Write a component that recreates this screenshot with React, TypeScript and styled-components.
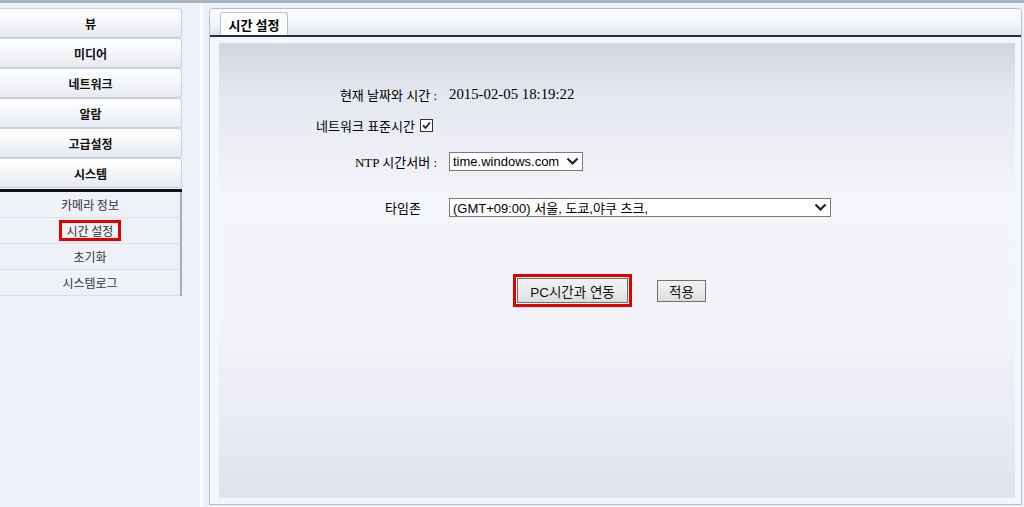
import styled, { createGlobalStyle } from 'styled-components';

const GlobalStyle = createGlobalStyle`
  html, body {
    margin: 0;
    padding: 0;
    background: #EDF1F9;
  }
  body {
    font-family: "Liberation Sans", "Noto Sans CJK KR", sans-serif;
    color: #000;
  }
`

const Page = styled.div`
  display: flex;
  height: 507px;
  box-sizing: border-box;
  border-top: 3px solid #A9B4C1;
  overflow: hidden;
`

const Sidebar = styled.nav`
  width: 182px;
  padding-top: 5px;
  flex-shrink: 0;
`

const MenuButton = styled.div`
  height: 30px;
  box-sizing: border-box;
  display: flex;
  align-items: center;
  justify-content: center;
  border: 1px solid #C9D1DC;
  border-left: none;
  border-radius: 0 3px 3px 0;
  background: linear-gradient(180deg, #FFFFFF 0%, #F7F8FA 40%, #E6E9EE 100%);
  font-family: "Noto Sans CJK KR", sans-serif;
  font-weight: bold;
  font-size: 12px;
  color: #111;
`

const ActiveBar = styled.div`
  height: 3px;
  margin: 1px 0 0;
  background: #111;
`

const SubMenu = styled.ul`
  list-style: none;
  margin: 0;
  padding: 0;
  width: 180px;
  background: #EEF1F6;
  border-right: 2px solid #A8B0BA;
`

const SubItem = styled.li`
  height: 26px;
  display: flex;
  align-items: center;
  justify-content: center;
  border-bottom: 1px solid #DCE1E8;
  font-family: "Noto Sans CJK KR", sans-serif;
  font-size: 12px;
  color: #333;
  box-sizing: border-box;
`

const Marked = styled.span`
  border: 3px solid #E50000;
  padding: 0 5px;
  line-height: 15px;
`

const Divider = styled.div`
  width: 3px;
  margin-left: 18px;
  margin-right: 6px;
  background: #FFFFFF;
`

const Panel = styled.section`
  width: 813px;
  margin-top: 5px;
  height: 497px;
  box-sizing: border-box;
  border: 1px solid #B3BECB;
  border-radius: 4px 4px 0 0;
  background: #F3F6FA;
  display: flex;
  flex-direction: column;
`

const TabBar = styled.div`
  height: 26px;
  padding-left: 10px;
  display: flex;
  align-items: flex-end;
  background: linear-gradient(180deg, #FBFCFD 0%, #F4F7FA 50%, #E1E7EE 100%);
  border-bottom: 2px solid #1D3145;
  border-radius: 4px 4px 0 0;
`

const Tab = styled.div`
  width: 68px;
  height: 23px;
  box-sizing: border-box;
  border: 1px solid #B8C2CE;
  border-bottom: none;
  border-radius: 3px 3px 0 0;
  background: #FFFFFF;
  display: flex;
  align-items: center;
  justify-content: center;
  font-family: "Noto Sans CJK KR", sans-serif;
  font-weight: bold;
  font-size: 13px;
`

const Body = styled.div`
  flex: 1;
  padding: 6px 6px 6px 9px;
  display: flex;
`

const Inner = styled.div`
  flex: 1;
  background: linear-gradient(180deg, #D2D6E0 0%, #E5E8EF 12%, #F4F5F9 35%, #F3F4F8 60%, #E9EBF3 85%, #DEE2EB 100%);
  padding-top: 40px;
  font-family: "Liberation Serif", "Noto Sans CJK KR", serif;
  font-size: 13px;
`

const Row = styled.div<{ $gap: number }>`
  display: grid;
  grid-template-columns: 218px 1fr;
  column-gap: 12px;
  height: 22px;
  align-items: center;
  margin-top: ${p => p.$gap}px;
`

const Label = styled.div<{ $pad?: number }>`
  display: flex;
  justify-content: flex-end;
  align-items: center;
  gap: 5px;
  padding-right: ${p => p.$pad ?? 0}px;
  white-space: pre;
`

const Value = styled.div`
  display: flex;
  align-items: center;
  font-size: 14.8px;
`

const Select = styled.div<{ $width: number }>`
  width: ${p => p.$width}px;
  height: 19px;
  box-sizing: border-box;
  border: 1px solid #7A7A7A;
  background: #FFFFFF;
  display: flex;
  align-items: center;
  justify-content: space-between;
  padding: 0 3px 0 3px;
  font-family: "Liberation Sans", "Noto Sans CJK KR", sans-serif;
  font-size: 13px;
`

const Actions = styled.div`
  display: flex;
  align-items: center;
  gap: 25px;
  padding-left: 294px;
  margin-top: 56px;
`

const Highlight = styled.div`
  border: 3px solid #E50000;
  padding: 1px;
  display: flex;
`

const Button = styled.button<{ $width: number; $height: number }>`
  width: ${p => p.$width}px;
  height: ${p => p.$height}px;
  box-sizing: border-box;
  border: 1px solid #707070;
  border-radius: 0;
  background: linear-gradient(180deg, #F2F2F2 0%, #EBEBEB 50%, #DDDDDD 100%);
  font-family: "Liberation Sans", "Noto Sans CJK KR", sans-serif;
  font-size: 13.5px;
  color: #111;
  padding: 0;
`

function Chevron() {
  return (
    <svg width="13" height="9" viewBox="0 0 13 9">
      <polyline points="1.5,1.5 6.5,6.5 11.5,1.5" fill="none" stroke="#222" strokeWidth="2.2" />
    </svg>
  )
}

function CheckBox() {
  return (
    <svg width="13" height="13" viewBox="0 0 13 13">
      <rect x="0.5" y="0.5" width="12" height="12" fill="#fff" stroke="#333" />
      <polyline points="3,6.5 5.5,9 10,3.5" fill="none" stroke="#222" strokeWidth="1.8" />
    </svg>
  )
}

const menus = ['뷰', '미디어', '네트워크', '알람', '고급설정', '시스템'];
const subs = ['카메라 정보', '시간 설정', '초기화', '시스템로그'];

export default function App() {
  return (
    <>
      <GlobalStyle />
      <Page>
        <Sidebar>
          {menus.map(m => <MenuButton key={m}>{m}</MenuButton>)}
          <ActiveBar />
          <SubMenu>
            {subs.map(s => (
              <SubItem key={s}>{s === '시간 설정' ? <Marked>{s}</Marked> : s}</SubItem>
            ))}
          </SubMenu>
        </Sidebar>
        <Divider />
        <Panel>
          <TabBar>
            <Tab>시간 설정</Tab>
          </TabBar>
          <Body>
            <Inner>
              <Row $gap={0}>
                <Label>현재 날짜와 시간 :</Label>
                <Value>2015-02-05 18:19:22</Value>
              </Row>
              <Row $gap={9}>
                <Label $pad={4}>네트워크 표준시간<CheckBox /></Label>
                <Value />
              </Row>
              <Row $gap={14}>
                <Label>NTP 시간서버 :</Label>
                <Value>
                  <Select $width={134}>time.windows.com<Chevron /></Select>
                </Value>
              </Row>
              <Row $gap={24}>
                <Label $pad={16}>타임존</Label>
                <Value>
                  <Select $width={382}>(GMT+09:00) 서울, 도쿄,야쿠 츠크,<Chevron /></Select>
                </Value>
              </Row>
              <Actions>
                <Highlight>
                  <Button $width={111} $height={25}>PC시간과 연동</Button>
                </Highlight>
                <Button $width={49} $height={22}>적용</Button>
              </Actions>
            </Inner>
          </Body>
        </Panel>
      </Page>
    </>
  )
}
